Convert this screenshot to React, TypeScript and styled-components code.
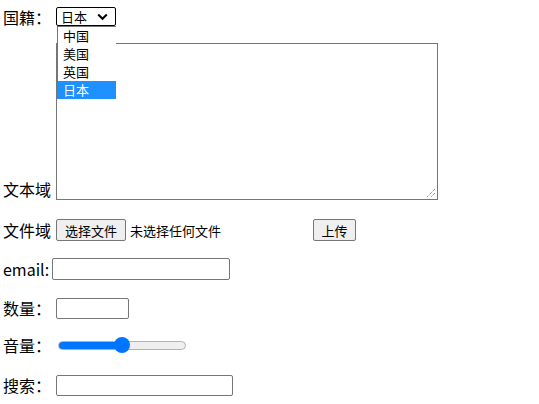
import React from 'react';
import styled, { createGlobalStyle } from 'styled-components';

const GlobalStyle = createGlobalStyle`
  html, body {
    margin: 0;
    padding: 0;
    background: #ffffff;
  }
  body {
    font-family: "Noto Sans CJK SC", "Microsoft YaHei", sans-serif;
    color: #000000;
  }
`;

const Page = styled.div`
  width: 539px;
  height: 404px;
  padding-left: 3px;
  display: flex;
  flex-direction: column;
  box-sizing: border-box;
  overflow: hidden;
`;

const Row = styled.div<{ $top: number; $h: number; $align?: string; $gap?: number }>`
  margin-top: ${(p) => p.$top}px;
  height: ${(p) => p.$h}px;
  display: flex;
  align-items: ${(p) => p.$align || 'center'};
  gap: ${(p) => p.$gap ?? 5}px;
  position: relative;
`;

const Label = styled.span`
  font-size: 16px;
  line-height: 20px;
  white-space: nowrap;
`;

const SelectWrap = styled.div`
  position: relative;
`;

const SelectBox = styled.div`
  width: 60px;
  height: 19px;
  box-sizing: border-box;
  border: 1px solid #000000;
  border-radius: 2px;
  display: flex;
  align-items: center;
  padding-left: 4px;
  font-size: 13px;
  line-height: 16px;
  gap: 10px;
`;

const DropList = styled.ul`
  position: absolute;
  left: 1px;
  top: 19px;
  width: 58px;
  margin: 0;
  padding: 0;
  list-style: none;
  background: #ffffff;
  border-left: 1px solid #767676;
  border-top: 1px solid #767676;
  z-index: 2;
`;

const DropItem = styled.li<{ $active?: boolean }>`
  height: 18px;
  line-height: 17px;
  padding-left: 5px;
  font-size: 13px;
  background: ${(p) => (p.$active ? '#1e90ff' : 'transparent')};
  color: ${(p) => (p.$active ? '#ffffff' : '#000000')};
`;

const TextArea = styled.div`
  width: 382px;
  height: 157px;
  box-sizing: border-box;
  border: 1px solid #767676;
  position: relative;
  margin-bottom: -1px;
`;

const Grip = styled.svg`
  position: absolute;
  right: 1px;
  bottom: 1px;
`;

const Button = styled.div<{ $w: number }>`
  width: ${(p) => p.$w}px;
  height: 22px;
  box-sizing: border-box;
  background: #efefef;
  border: 1px solid #767676;
  border-radius: 2px;
  font-size: 13px;
  display: flex;
  align-items: center;
  justify-content: center;
`;

const FileNote = styled.span`
  font-size: 13px;
  margin-left: -1px;
  width: 178px;
`;

const TextInput = styled.div<{ $w: number; $h?: number }>`
  width: ${(p) => p.$w}px;
  height: ${(p) => p.$h || 21}px;
  box-sizing: border-box;
  border: 1px solid #767676;
  border-radius: 2px;
`;

const Range = styled.div`
  margin-left: 2px;
  width: 128px;
  height: 16px;
  position: relative;
  display: flex;
  align-items: center;
`;

const Track = styled.div`
  width: 100%;
  height: 9px;
  box-sizing: border-box;
  border: 1px solid #b2b2b2;
  border-radius: 5px;
  background: #efefef;
  overflow: hidden;
`;

const Fill = styled.div`
  height: 100%;
  background: #0075ff;
`;

const Thumb = styled.div`
  position: absolute;
  top: 0;
  width: 16px;
  height: 16px;
  border-radius: 50%;
  background: #0075ff;
`;

export default function App() {
  const volume = 50;
  return (
    <>
      <GlobalStyle />
      <Page>
        <Row $top={6} $h={21}>
          <Label>国籍：</Label>
          <SelectWrap>
            <SelectBox>
              <span>日本</span>
              <svg width="11" height="8" viewBox="0 0 11 8">
                <path d="M1.2 1.5 L5.5 5.8 L9.8 1.5" fill="none" stroke="#000" strokeWidth="2" />
              </svg>
            </SelectBox>
            <DropList>
              <DropItem>中国</DropItem>
              <DropItem>美国</DropItem>
              <DropItem>英国</DropItem>
              <DropItem $active>日本</DropItem>
            </DropList>
          </SelectWrap>
        </Row>
        <Row $top={15} $h={157} $align="flex-end">
          <Label>文本域</Label>
          <TextArea>
            <Grip width="11" height="11" viewBox="0 0 11 11">
              <path d="M10 2 L2 10 M10 6 L6 10" stroke="#666" strokeWidth="1" strokeDasharray="1 1" />
            </Grip>
          </TextArea>
        </Row>
        <Row $top={19} $h={24}>
          <Label>文件域</Label>
          <Button $w={70}>选择文件</Button>
          <FileNote>未选择任何文件</FileNote>
          <Button $w={43}>上传</Button>
        </Row>
        <Row $top={15} $h={24} $gap={3}>
          <Label>email:</Label>
          <TextInput $w={178} $h={22} />
        </Row>
        <Row $top={15} $h={24}>
          <Label>数量：</Label>
          <TextInput $w={73} />
        </Row>
        <Row $top={13} $h={24}>
          <Label>音量：</Label>
          <Range>
            <Track>
              <Fill style={{ width: `${volume}%` }} />
            </Track>
            <Thumb style={{ left: `calc(${volume}% - 8px)` }} />
          </Range>
        </Row>
        <Row $top={16} $h={24}>
          <Label>搜索：</Label>
          <TextInput $w={177} />
        </Row>
      </Page>
    </>
  );
}
